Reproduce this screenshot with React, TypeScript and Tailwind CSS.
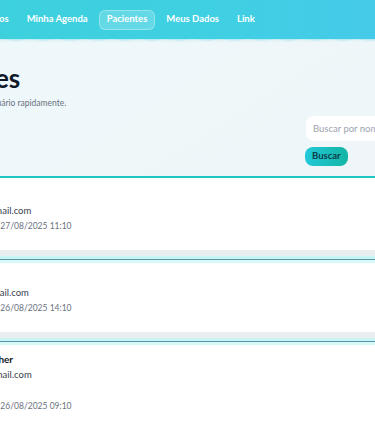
import React from "react";

const navItems = ["Agendamentos", "Minha Agenda", "Pacientes", "Meus Dados", "Link"];

type Patient = {
  name: string;
  email: string;
  phone?: string;
  date: string;
};

const patients: Patient[] = [
  { name: "Ana Lima", email: "ana.limasp@gmail.com", date: "Última consulta: 27/08/2025 11:10" },
  { name: "João Reis", email: "joao.reis.s@gmail.com", date: "Última consulta: 26/08/2025 14:10" },
  {
    name: "Ana Lucy Fischer",
    email: "mlfischer.s@gmail.com",
    phone: "11 9876-5432",
    date: "Última consulta: 26/08/2025 09:10",
  },
];

function Wave() {
  const bumps = Array.from({ length: 22 }, (_, i) => i * 28);
  return (
    <svg className="block w-full h-[3px]" viewBox="0 0 616 3" preserveAspectRatio="none">
      <rect x="0" y="0" width="616" height="3" fill="#e6f3f6" />
      <path
        d={
          "M0 0 " +
          bumps.map((x) => `Q${x + 7} 2 ${x + 14} 1 Q${x + 21} 0 ${x + 28} 1`).join(" ") +
          " L616 0 Z"
        }
        fill="#b9ecf2"
      />
    </svg>
  );
}

export default function App() {
  return (
    <div
      className="w-[375px] h-[430px] overflow-hidden bg-[#eef5f8]"
      style={{ fontFamily: 'Lato, "Noto Sans", sans-serif' }}
    >
      <div className="w-[600px] -ml-[100px]">
        <header className="bg-gradient-to-r from-[#3cd0da] via-[#3fd0e2] to-[#4ac6ee]">
          <nav className="h-[39px] flex items-center gap-[4px] pl-[38px]">
            {navItems.map((item) => (
              <span
                key={item}
                className={
                  item === "Pacientes"
                    ? "px-[7px] h-5 flex items-center rounded-md bg-white/20 border border-white/30 text-white text-[9.5px] font-bold"
                    : "px-[7px] h-5 flex items-center text-white text-[9.5px] font-bold"
                }
              >
                {item}
              </span>
            ))}
          </nav>
        </header>
        <Wave />

        <main className="bg-gradient-to-br from-[#eef8fa] to-[#f0f4f8] pt-[20px]">
          <div className="pl-[9px] pr-[16px]">
            <h1 className="text-[26px] leading-8 font-bold text-[#111827]">Pacientes</h1>
            <p className="mt-0.5 text-[8.5px] leading-[14px] text-[#6b7280]">
              Busque e encontre o usuário rapidamente.
            </p>
            <div className="flex justify-end mt-[6px]">
              <div className="w-[178px] flex flex-col items-start gap-[6px]">
                <input
                  className="w-full h-[25px] rounded-lg bg-white px-[7px] text-[9.5px] text-[#374151] placeholder:text-[#9ca3af] outline-none"
                  placeholder="Buscar por nome ou e-mail"
                />
                <button className="h-[19px] px-[7px] -ml-px rounded-lg bg-gradient-to-r from-[#22c8d8] to-[#14b5a4] text-[9.5px] font-bold text-[#0d3b4a]">
                  Buscar
                </button>
              </div>
            </div>
          </div>

          <div className="mt-[10px] flex flex-col gap-[6px] bg-[#e8eef0]">
            {patients.map((p, i) => (
              <div key={p.email} className="bg-white">
                {i === 0 ? (
                  <div className="h-[2px] bg-[#1ec6c8]" />
                ) : (
                  <div>
                    <div className="h-[3px] bg-[#c8f6f2]" />
                    <div className="h-px bg-[#5d90a8]" />
                    <div className="h-[3px] bg-[#d6faf6]" />
                  </div>
                )}
                <div className={i === 0 ? "pl-[38px] pt-[9px] pb-4" : "pl-[38px] pt-[6px] pb-4"}>
                  <div className="text-[10px] leading-4 font-bold text-[#111827]">{p.name}</div>
                  <div className="text-[9.5px] leading-4 text-[#374151]">{p.email}</div>
                  {p.phone && <div className="text-[9.5px] leading-4 text-[#374151]">{p.phone}</div>}
                  <div className="text-[8.5px] leading-[15px] text-[#6b7280]">{p.date}</div>
                </div>
              </div>
            ))}
          </div>
        </main>
      </div>
    </div>
  );
}
